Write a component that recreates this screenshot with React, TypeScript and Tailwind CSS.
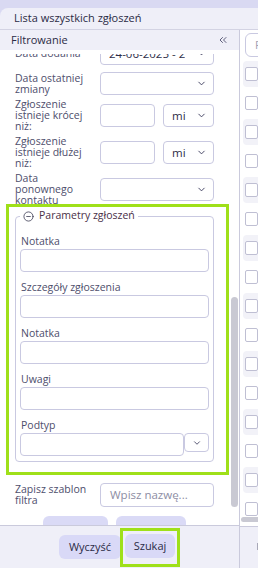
import React from 'react';
import { ChevronDown, ChevronsLeft, CircleMinus } from 'lucide-react';

const font = { fontFamily: '"Open Sans", "Liberation Sans", sans-serif' };

const Select = ({ value, w }: { value?: string; w: string }) => (
  <div className={`${w} h-[23px] shrink-0 flex items-center justify-between border border-[#c9c9e1] rounded-[4px] bg-white pl-[8px] pr-[6px] text-[11.5px] text-[#2e2e48]`}>
    <span className="truncate">{value}</span>
    <ChevronDown className="w-[11px] h-[11px] text-[#3a3a5c] shrink-0" strokeWidth={2} />
  </div>
);

const Row = ({ label, children, h = 'h-[33px]' }: { label: React.ReactNode; children: React.ReactNode; h?: string }) => (
  <div className={`flex items-center ${h}`}>
    <div className="w-[85px] shrink-0 text-[10.5px] leading-[11px] text-[#4e4e6c]">{label}</div>
    {children}
  </div>
);

const Field = ({ label }: { label: string }) => (
  <div>
    <div className="h-[14px] leading-[14px] text-[10.5px] text-[#4e4e6c] pl-[1px] mb-[1px]">{label}</div>
    <div className="h-[23px] border border-[#c9c9e1] rounded-[4px] bg-white" />
  </div>
);

const RightRows = () => {
  const pairs = Array.from({ length: 8 });
  return (
    <div className="h-[456px] overflow-hidden">
      {pairs.map((_, i) => (
        <React.Fragment key={i}>
          <div className="h-[26px] ml-[3px] bg-[#f2f2f8] rounded-l-[4px] flex items-center pl-[2px]">
            <div className="w-[14px] h-[14px] border border-[#bfbfd3] rounded-[2px] bg-white" />
          </div>
          <div className="h-[32px] flex items-center pl-[5px]">
            <div className="w-[14px] h-[14px] border border-[#bfbfd3] rounded-[2px] bg-white" />
          </div>
        </React.Fragment>
      ))}
    </div>
  );
};

export default function App() {
  return (
    <div style={font} className="w-[258px] h-[568px] overflow-hidden bg-[#d9d9f2]">
      <div className="h-[8px]" />
      <div className="h-[560px] bg-[#efeff8] rounded-tl-[8px] flex flex-col">
        <div className="h-[21px] shrink-0 flex items-center pl-[14px] text-[11px] text-[#2b2b45]">
          Lista wszystkich zgłoszeń
        </div>
        <div className="flex flex-1 min-h-0 border-t border-[#d3d3e3]">
          {/* Filters panel */}
          <div className="w-[240px] shrink-0 border-r border-[#cacadc] flex flex-col">
            <div className="h-[20px] shrink-0 flex items-center justify-between pl-[11px] pr-[10px] text-[11px] text-[#2b2b45]">
              <span>Filtrowanie</span>
              <ChevronsLeft className="w-[12px] h-[12px] text-[#3a3a5c]" strokeWidth={1.6} />
            </div>
            <div className="h-[475px] shrink-0 bg-white flex overflow-hidden">
              <div className="w-[230px] shrink-0 pt-[4px] flex flex-col">
                <div className="flex-1 min-h-0 overflow-hidden">
                  <div className="-mt-[12px] flex flex-col gap-[4px] pl-[15px] pr-[15px]">
                    <Row label="Data dodania" h="h-[23px] mb-[3px]">
                      <Select w="w-[114px]" value="24-06-2025 - 2" />
                    </Row>
                    <Row label={<>Data ostatniej<br />zmiany</>} h="h-[23px]">
                      <Select w="w-[114px]" />
                    </Row>
                    <Row label={<>Zgłoszenie<br />istnieje krócej<br />niż:</>}>
                      <div className="w-[55px] h-[23px] border border-[#c9c9e1] rounded-[4px]" />
                      <div className="ml-[8px]"><Select w="w-[51px]" value="mi" /></div>
                    </Row>
                    <Row label={<>Zgłoszenie<br />istnieje dłużej<br />niż:</>}>
                      <div className="w-[55px] h-[23px] border border-[#c9c9e1] rounded-[4px]" />
                      <div className="ml-[8px]"><Select w="w-[51px]" value="mi" /></div>
                    </Row>
                    <Row label={<>Data<br />ponownego<br />kontaktu</>}>
                      <Select w="w-[114px]" />
                    </Row>
                  </div>

                  {/* Highlighted params group */}
                  <div className="relative -mt-[2px] ml-[6px] mr-[1px] border-[3px] border-[#9fe019] bg-white pt-[2px] pb-[10px] pl-[6px] pr-[12px]">
                    <fieldset className="border border-[#c9c9e1] rounded-[4px] px-[4px] pb-[5px]">
                      <legend className="px-[3px] h-[14px] flex items-center gap-[5px] text-[10.5px] text-[#4a3048]">
                        <CircleMinus className="w-[11px] h-[11px] text-[#2b2b45]" strokeWidth={1.6} />
                        <span>Parametry zgłoszeń</span>
                      </legend>
                      <div className="mt-[11px] flex flex-col gap-[8px]">
                        <Field label="Notatka" />
                        <Field label="Szczegóły zgłoszenia" />
                        <Field label="Notatka" />
                        <Field label="Uwagi" />
                        <div>
                          <div className="h-[14px] leading-[14px] text-[10.5px] text-[#4e4e6c] pl-[1px] mb-[1px]">Podtyp</div>
                          <div className="flex items-start">
                            <div className="flex-1 h-[23px] border border-[#c9c9e1] rounded-[4px]" />
                            <div className="w-[25px] h-[19px] border border-[#c9c9e1] rounded-[4px] flex items-center justify-center">
                              <ChevronDown className="w-[10px] h-[10px] text-[#3a3a5c]" strokeWidth={2} />
                            </div>
                          </div>
                        </div>
                      </div>
                    </fieldset>
                  </div>

                  <div className="mt-[8px] pl-[15px] pr-[15px]">
                    <Row label={<>Zapisz szablon<br />filtra</>} h="h-[24px]">
                      <div className="w-[114px] h-[24px] border border-[#c9c9e1] rounded-[4px] flex items-center pl-[9px] text-[11.5px] text-[#8d8da4]">
                        Wpisz nazwę...
                      </div>
                    </Row>
                  </div>
                  <div className="mt-[9px] flex justify-center gap-[8px] pr-[2px]">
                    <div className="w-[65px] h-[30px] rounded-[6px] bg-[#dadaf6] text-[11px] text-[#2b2b45] flex items-center justify-center">Wczytaj</div>
                    <div className="w-[70px] h-[30px] rounded-[6px] bg-[#dadaf6] text-[11px] text-[#2b2b45] flex items-center justify-center">Zapisz</div>
                  </div>
                </div>
              </div>
              <div className="w-[9px] shrink-0">
                <div className="mt-[247px] mx-[1px] h-[210px] rounded-full bg-[#c9c9d3]" />
              </div>
            </div>
            <div className="flex-1 border-t border-[#cacadc] flex justify-center pt-[2px]">
              <div className="mt-[7px] w-[62px] h-[24px] rounded-[6px] bg-[#d9d9f7] text-[11px] font-medium text-[#2b2b45] flex items-center justify-center">
                Wyczyść
              </div>
              <div className="-ml-[1px] h-[39px] border-[3px] border-[#9fe019] p-[2px] pt-[3px]">
                <div className="w-[50px] h-[24px] rounded-[6px] bg-[#d9d9f7] text-[11px] font-medium text-[#2b2b45] flex items-center justify-center">
                  Szukaj
                </div>
              </div>
            </div>
          </div>

          {/* Results panel (cut off) */}
          <div className="flex-1 min-w-0 flex flex-col overflow-hidden">
            <div className="h-[496px] shrink-0 bg-white flex flex-col">
              <div className="h-[31px] shrink-0 pt-[3px] pl-[5px]">
                <div className="w-[40px] h-[24px] border border-[#c9c9e1] rounded-[6px] flex items-center pl-[9px] text-[11px] text-[#a0a0b4]">
                  Filtr
                </div>
              </div>
              <RightRows />
              <div className="h-[8px] shrink-0">
                <div className="ml-[1px] h-[5px] w-[40px] rounded-full bg-[#c9c9d3]" />
              </div>
            </div>
            <div className="flex-1 border-t border-[#cacadc] pt-[16px] pl-[17px]">
              <div className="w-[4px] h-[7px] bg-[#a8a8b8]" />
            </div>
          </div>
        </div>
      </div>
    </div>
  );
}
